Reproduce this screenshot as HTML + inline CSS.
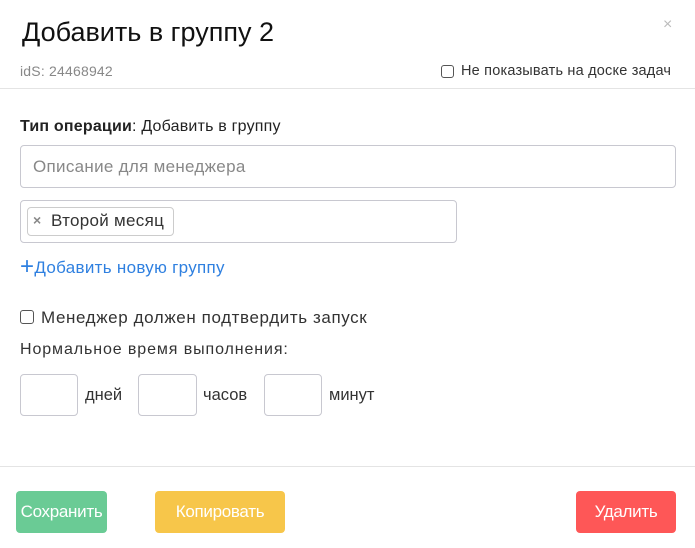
<!DOCTYPE html>
<html><head><meta charset="utf-8"><style>
body{margin:0;width:695px;height:548px;background:#fff;font-family:"Liberation Sans",sans-serif;position:relative;overflow:hidden;color:#222}
.a{position:absolute;white-space:nowrap}
.box{position:absolute;border:1px solid #c8c8d0;border-radius:4px;box-sizing:border-box}
.cb{position:absolute;width:13px;height:13px;border:1px solid #555;border-radius:3px;box-sizing:border-box}
.btn{position:absolute;top:491px;height:42px;border-radius:4px;color:#fff;font-size:17px;line-height:42px;text-align:center;letter-spacing:-0.3px}
</style></head><body>
<div class="a" style="left:22px;top:17px;font-size:27px;letter-spacing:0px;color:#111">Добавить в группу 2</div>
<div class="a" style="left:663px;top:16px;font-size:16px;color:#bbb">×</div>
<div class="a" style="left:20px;top:63px;font-size:14px;color:#888;letter-spacing:0.2px">idS: 24468942</div>
<div class="cb" style="left:441px;top:65px"></div>
<div class="a" style="left:461px;top:63px;font-size:14.5px;color:#333;letter-spacing:0.2px">Не показывать на доске задач</div>
<div class="a" style="left:0;top:88px;width:695px;height:1px;background:#e4e4e4"></div>
<div class="a" style="left:20px;top:118px;font-size:16px;letter-spacing:0.2px"><b>Тип операции</b>: Добавить в группу</div>
<div class="box" style="left:20px;top:145px;width:656px;height:43px"></div>
<div class="a" style="left:33px;top:157px;font-size:17px;color:#888;letter-spacing:0.3px">Описание для менеджера</div>
<div class="box" style="left:20px;top:200px;width:437px;height:43px"></div>
<div class="box" style="left:27px;top:207px;width:147px;height:29px;border-color:#ccc"></div>
<div class="a" style="left:33px;top:212px;font-size:14px;color:#888;font-weight:bold">×</div>
<div class="a" style="left:51px;top:211px;font-size:17px;color:#333;letter-spacing:0.3px">Второй месяц</div>
<div class="a" style="left:20px;top:258px;font-size:17px;color:#2f80e0;letter-spacing:0.3px"><span style="font-size:24px;line-height:17px;vertical-align:-1px">+</span>Добавить новую группу</div>
<div class="cb" style="left:20px;top:310px;width:14px;height:14px"></div>
<div class="a" style="left:41px;top:308px;font-size:17px;color:#333;letter-spacing:0.6px">Менеджер должен подтвердить запуск</div>
<div class="a" style="left:20px;top:341px;font-size:16px;color:#333;letter-spacing:0.9px">Нормальное время выполнения:</div>
<div class="box" style="left:20px;top:374px;width:58px;height:42px"></div>
<div class="a" style="left:85px;top:386px;font-size:16.5px;color:#333">дней</div>
<div class="box" style="left:138px;top:374px;width:59px;height:42px"></div>
<div class="a" style="left:203px;top:386px;font-size:16.5px;color:#333">часов</div>
<div class="box" style="left:264px;top:374px;width:58px;height:42px"></div>
<div class="a" style="left:329px;top:386px;font-size:16.5px;color:#333">минут</div>
<div class="a" style="left:0;top:466px;width:695px;height:1px;background:#e4e4e4"></div>
<div class="btn" style="left:16px;width:91px;background:#6acb95">Сохранить</div>
<div class="btn" style="left:155px;width:130px;background:#f7c64a">Копировать</div>
<div class="btn" style="left:576px;width:100px;background:#fe5757">Удалить</div>
</body></html>
